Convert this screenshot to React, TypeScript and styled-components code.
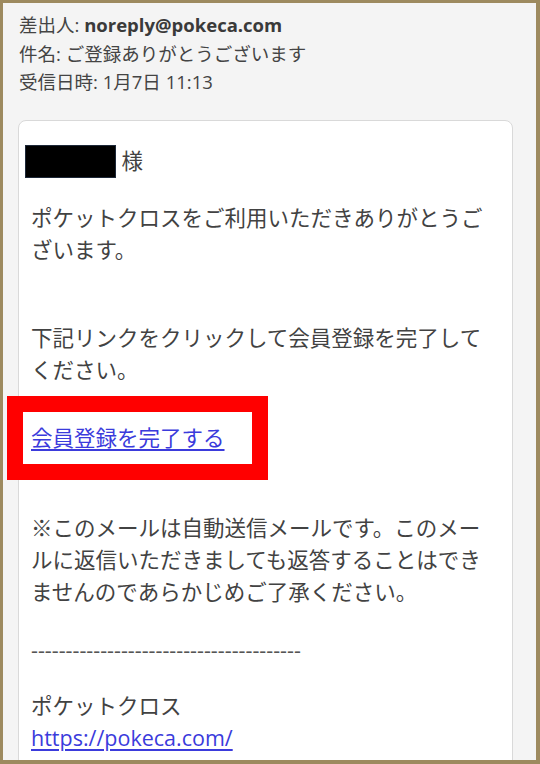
import styled, { createGlobalStyle } from 'styled-components';

const GlobalStyle = createGlobalStyle`
  html, body {
    margin: 0;
    padding: 0;
    background: #ffffff;
  }
  * {
    box-sizing: border-box;
  }
`;

const FONT = `"Open Sans", "Noto Sans CJK JP", sans-serif`;

export default function App() {
  return (
    <>
      <GlobalStyle />
      <Frame>
        <MailHeader>
          <HeaderLine>
            差出人: <strong>noreply@pokeca.com</strong>
          </HeaderLine>
          <HeaderLine>件名: ご登録ありがとうございます</HeaderLine>
          <HeaderLine>受信日時: 1月7日 11:13</HeaderLine>
        </MailHeader>

        <MailCard>
          <Para>
            <Redacted /> 様
          </Para>
          <Para $gap={24}>
            ポケットクロスをご利用いただきありがとうご
            <br />
            ざいます。
          </Para>
          <Para $gap={56}>
            下記リンクをクリックして会員登録を完了して
            <br />
            ください。
          </Para>
          <Para $gap={36}>
            <Highlight>
              <MailLink href="#">会員登録を完了する</MailLink>
              <RedBox />
            </Highlight>
          </Para>
          <Para $gap={58}>
            ※このメールは自動送信メールです。このメー
            <br />
            ルに返信いただきましても返答することはでき
            <br />
            ませんのであらかじめご了承ください。
          </Para>
          <Divider $gap={26}>---------------------------------------</Divider>
          <Para $gap={24}>
            ポケットクロス
            <br />
            <MailLink href="#">https://pokeca.com/</MailLink>
          </Para>
        </MailCard>
      </Frame>
    </>
  );
}

const Frame = styled.div`
  width: 540px;
  height: 764px;
  overflow: hidden;
  background: #f4f4f4;
  border-style: solid;
  border-color: #9d8a5f;
  border-width: 3px 4px 4px 3px;
  font-family: ${FONT};
`;

const MailHeader = styled.header`
  padding: 8px 16px 0;
  color: #444444;
`;

const HeaderLine = styled.div`
  font-size: 18.5px;
  line-height: 28.5px;
  white-space: nowrap;

  strong {
    font-weight: 700;
    color: #3a3a3a;
  }
`;

const MailCard = styled.section`
  margin: 23px 23px 0 15px;
  padding: 24px 12px 40px;
  background: #ffffff;
  border: 1px solid #d9d9d9;
  border-radius: 8px;
  color: #424242;
  font-size: 21.5px;
  line-height: 32px;
`;

const Para = styled.p<{ $gap?: number }>`
  margin: ${(p) => p.$gap ?? 0}px 0 0;
  white-space: nowrap;
`;

const Redacted = styled.span`
  display: inline-block;
  width: 91px;
  height: 33px;
  margin-left: -6px;
  vertical-align: -9px;
  background: #000000;
  border: 1px solid #1d2838;
`;

const Highlight = styled.span`
  position: relative;
  display: inline-block;
`;

const RedBox = styled.span`
  position: absolute;
  left: -24px;
  top: -26px;
  width: 261px;
  height: 84px;
  border: 16px solid #ff0000;
  pointer-events: none;
`;

const MailLink = styled.a`
  color: #3b3bdc;
  text-decoration: underline;
  text-underline-offset: 3px;
`;

const Divider = styled.p<{ $gap?: number }>`
  margin: ${(p) => p.$gap ?? 0}px 0 0;
  color: #555555;
  white-space: nowrap;
`;
